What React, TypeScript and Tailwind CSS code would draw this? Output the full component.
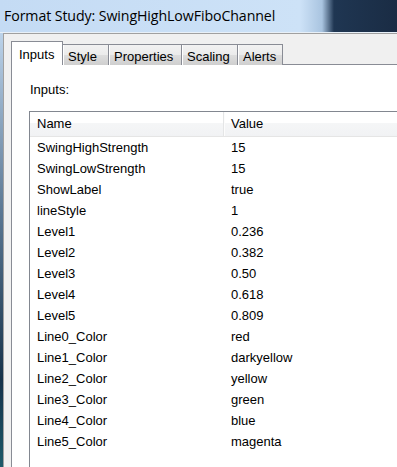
const rows: [string, string][] = [
  ["SwingHighStrength", "15"],
  ["SwingLowStrength", "15"],
  ["ShowLabel", "true"],
  ["lineStyle", "1"],
  ["Level1", "0.236"],
  ["Level2", "0.382"],
  ["Level3", "0.50"],
  ["Level4", "0.618"],
  ["Level5", "0.809"],
  ["Line0_Color", "red"],
  ["Line1_Color", "darkyellow"],
  ["Line2_Color", "yellow"],
  ["Line3_Color", "green"],
  ["Line4_Color", "blue"],
  ["Line5_Color", "magenta"],
];

// unselected tabs: label + fixed width so the borders land where the dialog has them
const tabs: [string, string][] = [
  ["Style", "w-[47px]"],
  ["Properties", "w-[74px]"],
  ["Scaling", "w-[57px]"],
  ["Alerts", "w-[46px]"],
];

export default function App() {
  return (
    <div className="w-[397px] h-[467px] overflow-hidden flex flex-col bg-[#f0f0f0] font-['Liberation_Sans',Arial,sans-serif] text-[13px] text-black">
      {/* title bar */}
      <div className="h-[33px] shrink-0 flex items-center pl-[4px] pb-[1px] bg-[linear-gradient(to_right,#c4dbf4_0px,#cde2f7_300px,#a9c4e0_322px,#1f3652_334px,#1a2c44_397px)] border-b border-[#e8f0f8]">
        <span className="font-['Open_Sans',sans-serif] text-[14.2px] tracking-[-0.1px] text-black">
          Format Study: SwingHighLowFiboChannel
        </span>
      </div>

      <div className="flex-1 flex min-h-0">
        {/* window frame */}
        <div className="w-[3px] shrink-0 bg-[linear-gradient(to_bottom,#bcd3ea,#5d7a96_40%,#16324a_80%,#1d5a6a)]" />

        {/* client area */}
        <div className="flex-1 flex flex-col min-w-0 border-l border-t border-[#a0a0a0] pl-[7px] pt-[7px]">
          {/* tab strip */}
          <div className="flex items-end h-[24px] relative z-10 -mb-px">
            <div className="w-[52px] h-[24px] bg-white border border-b-0 border-[#898c95] pl-[7px] pt-[3px]">
              Inputs
            </div>
            {tabs.map(([label, w]) => (
              <div
                key={label}
                className={`${w} h-[21px] -ml-px first:ml-0 border border-b-0 border-[#898c95] bg-[linear-gradient(to_bottom,#f2f2f2,#ebebeb_50%,#dddddd_51%,#cfcfcf)] pl-[5px] pt-[2px] shadow-[inset_1px_0_0_#fff]`}
              >
                {label}
              </div>
            ))}
          </div>

          {/* tab panel */}
          <div className="flex-1 flex flex-col bg-white border-l border-t border-[#898c95] pl-[17px] pt-[17px]">
            <div className="h-[15px] leading-[15px] pl-px">Inputs:</div>

            <div className="flex-1 mt-[14px] border-l border-t border-[#828790] bg-white">
              {/* header */}
              <div className="h-[25px] flex bg-[linear-gradient(to_bottom,#ffffff,#ffffff_45%,#f5f6f7_46%,#f1f2f4)] border-b border-[#e5e5e5]">
                <div className="w-[194px] pl-[7px] flex items-center border-r border-[#e4e5e6] shadow-[1px_0_0_#fcfcfc]">
                  Name
                </div>
                <div className="flex-1 pl-[7px] flex items-center">Value</div>
              </div>

              {rows.map(([name, value]) => (
                <div key={name} className="h-[21px] flex items-center">
                  <div className="w-[194px] pl-[7px]">{name}</div>
                  <div className="flex-1 pl-[7px]">{value}</div>
                </div>
              ))}
            </div>
          </div>
        </div>
      </div>
    </div>
  );
}
